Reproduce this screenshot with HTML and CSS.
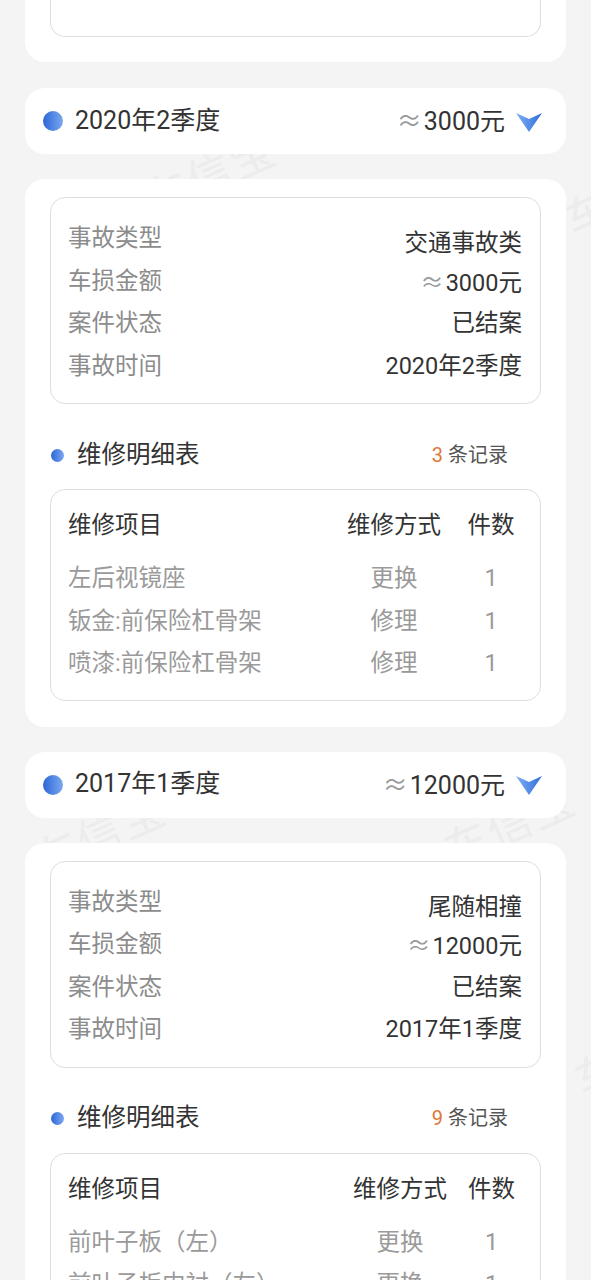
FILE: index.html
```html
<!DOCTYPE html>
<html lang="zh-CN">
<head>
  <meta charset="UTF-8">
  <meta name="viewport" content="width=device-width, initial-scale=1.0">
  <title>出险记录</title>
  <link rel="stylesheet" href="styles.css">
</head>
<body>
  <div class="page">
    <!-- watermark sits under the cards -->
    <div class="watermarks">
      <span class="mark" style="left: 140px; top: 140px;">车信宝</span>
      <span class="mark" style="left: 560px; top: 160px;">车信宝</span>
      <span class="mark" style="left: 30px; top: 800px;">车信宝</span>
      <span class="mark" style="left: 440px; top: 790px;">车信宝</span>
      <span class="mark" style="left: 570px; top: 1020px;">车信宝</span>
    </div>

    <div class="card card-cut">
      <div class="box box-cut"></div>
    </div>

    <div class="card period">
      <span class="dot"></span>
      <span class="period-name">2020年2季度</span>
      <span class="period-amount"><span class="approx">≈</span>3000元</span>
      <svg class="chevron" width="26" height="19" viewBox="0 0 26 19">
        <defs>
          <linearGradient id="chev1" x1="0" y1="0" x2="1" y2="0">
            <stop offset="0" stop-color="#7eaef3"/>
            <stop offset="1" stop-color="#2f6ddb"/>
          </linearGradient>
        </defs>
        <path d="M0 0 L13 6 L26 0 L13 19 Z" fill="url(#chev1)"/>
      </svg>
    </div>

    <div class="card detail">
      <div class="box info">
        <div class="info-row"><span class="info-label">事故类型</span><span class="info-value">交通事故类</span></div>
        <div class="info-row"><span class="info-label">车损金额</span><span class="info-value"><span class="approx">≈</span>3000元</span></div>
        <div class="info-row"><span class="info-label">案件状态</span><span class="info-value">已结案</span></div>
        <div class="info-row"><span class="info-label">事故时间</span><span class="info-value">2020年2季度</span></div>
      </div>

      <div class="section-head">
        <span class="dot dot-small"></span>
        <span class="section-title">维修明细表</span>
        <span class="count"><em>3</em> 条记录</span>
      </div>

      <div class="box repair">
        <div class="repair-row repair-head"><span>维修项目</span><span>维修方式</span><span>件数</span></div>
        <div class="repair-body">
          <div class="repair-row"><span>左后视镜座</span><span>更换</span><span>1</span></div>
          <div class="repair-row"><span>钣金:前保险杠骨架</span><span>修理</span><span>1</span></div>
          <div class="repair-row"><span>喷漆:前保险杠骨架</span><span>修理</span><span>1</span></div>
        </div>
      </div>
    </div>

    <div class="card period">
      <span class="dot"></span>
      <span class="period-name">2017年1季度</span>
      <span class="period-amount"><span class="approx">≈</span>12000元</span>
      <svg class="chevron" width="26" height="19" viewBox="0 0 26 19">
        <defs>
          <linearGradient id="chev2" x1="0" y1="0" x2="1" y2="0">
            <stop offset="0" stop-color="#7eaef3"/>
            <stop offset="1" stop-color="#2f6ddb"/>
          </linearGradient>
        </defs>
        <path d="M0 0 L13 6 L26 0 L13 19 Z" fill="url(#chev2)"/>
      </svg>
    </div>

    <div class="card detail">
      <div class="box info">
        <div class="info-row"><span class="info-label">事故类型</span><span class="info-value">尾随相撞</span></div>
        <div class="info-row"><span class="info-label">车损金额</span><span class="info-value"><span class="approx">≈</span>12000元</span></div>
        <div class="info-row"><span class="info-label">案件状态</span><span class="info-value">已结案</span></div>
        <div class="info-row"><span class="info-label">事故时间</span><span class="info-value">2017年1季度</span></div>
      </div>

      <div class="section-head">
        <span class="dot dot-small"></span>
        <span class="section-title">维修明细表</span>
        <span class="count"><em>9</em> 条记录</span>
      </div>

      <div class="box repair repair-wide">
        <div class="repair-row repair-head"><span>维修项目</span><span>维修方式</span><span>件数</span></div>
        <div class="repair-body">
          <div class="repair-row"><span>前叶子板（左）</span><span>更换</span><span>1</span></div>
          <div class="repair-row"><span>前叶子板内衬（左）</span><span>更换</span><span>1</span></div>
        </div>
      </div>
    </div>
  </div>
</body>
</html>
```

FILE: styles.css
```css
body {
  margin: 0;
  background-color: #f4f4f4;
  font-family: Roboto, "Noto Sans CJK SC", sans-serif;
  color: #333;
}

.page {
  position: relative;
  padding: 0 25px;
  overflow: hidden;
}

.watermarks {
  position: absolute;
  left: 0;
  top: 0;
  right: 0;
  bottom: 0;
  z-index: 0;
}
.mark {
  position: absolute;
  font-family: "Noto Sans CJK SC", sans-serif;
  font-size: 44px;
  color: #ececec;
  letter-spacing: 2px;
  transform: rotate(-24deg);
  white-space: nowrap;
}

.card {
  position: relative;
  z-index: 1;
  background-color: #fff;
  border-radius: 20px;
  margin-bottom: 25px;
}

.card-cut {
  margin-top: -40px;
  padding: 0 25px 25px;
  margin-bottom: 26px;
}
.box-cut {
  height: 76px;
  border-top: none !important;
  border-top-left-radius: 0 !important;
  border-top-right-radius: 0 !important;
}

.box {
  border: 1px solid #dedede;
  border-radius: 15px;
}

/* period header */
.period {
  display: flex;
  align-items: center;
  height: 66px;
  padding: 0 24px 0 18px;
  line-height: 30px;
}
.dot {
  width: 20px;
  height: 20px;
  border-radius: 50%;
  background: linear-gradient(90deg, #2c67d6, #7ba8f1);
  flex-shrink: 0;
}
.period-name {
  margin-left: 12px;
  font-size: 25px;
  color: #333;
  flex: 1;
  margin-top: -1px;
}
.period-amount {
  font-size: 25px;
  color: #333;
  margin-top: -1px;
}
.approx {
  font-family: "Noto Sans CJK SC", sans-serif;
  color: #9a9a9a;
  margin-right: 2px;
}
.chevron {
  margin-left: 11px;
  margin-top: 2px;
}

/* detail card */
.detail {
  padding: 18px 25px 26px;
}

.info {
  padding: 19px 18px 16px 17px;
}
.info-row {
  display: flex;
  justify-content: space-between;
  height: 42.5px;
  line-height: 42.5px;
  font-size: 23.5px;
}
.info-label {
  color: #8c8c8c;
}
.info-value {
  color: #333;
}
.info-row:first-child .info-value {
  padding-top: 5px;
}

.section-head {
  display: flex;
  align-items: center;
  height: 34px;
  margin: 34px 0 17px;
  padding: 0 33px 0 1px;
  line-height: 34px;
}
.dot-small {
  width: 13px;
  height: 13px;
}
.section-title {
  margin-left: 13px;
  font-size: 24.5px;
  color: #333;
  flex: 1;
  margin-top: -1px;
}
.count {
  font-size: 20px;
  color: #555;
  margin-top: -1px;
}
.count em {
  font-style: normal;
  color: #e0763a;
}

/* repair table */
.repair {
  padding: 13px 18px 15px 17px;
}
.repair-row {
  display: grid;
  grid-template-columns: 1fr 132px 62px;
  height: 42.5px;
  line-height: 42.5px;
  font-size: 23.5px;
  color: #9a9a9a;
}
.repair-row span:nth-child(2),
.repair-row span:nth-child(3) {
  text-align: center;
}
.repair-head {
  height: 44px;
  line-height: 44px;
  color: #333;
}
.repair-body {
  margin-top: 10px;
}
.repair-wide .repair-row {
  grid-template-columns: 1fr 122px 61px;
}
```
